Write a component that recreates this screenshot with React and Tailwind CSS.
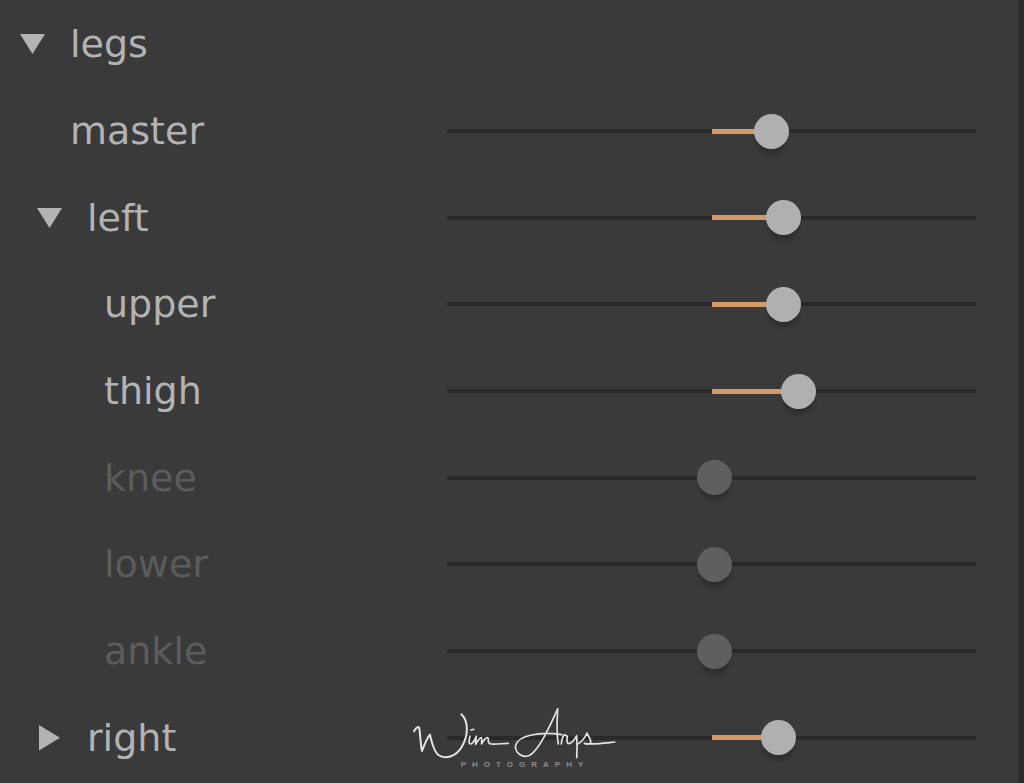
import { useState } from 'react';
import clsx from 'clsx';

const ROWS = [
    { id: 'legs', level: 0, group: true },
    { id: 'master', parent: 'legs', level: 0, value: 0.241 },
    { id: 'left', parent: 'legs', level: 1, group: true, value: 0.291 },
    { id: 'upper', parent: 'left', level: 2, value: 0.291 },
    { id: 'thigh', parent: 'left', level: 2, value: 0.352 },
    { id: 'knee', parent: 'left', level: 2, value: 0.01, disabled: true },
    { id: 'lower', parent: 'left', level: 2, value: 0.01, disabled: true },
    { id: 'ankle', parent: 'left', level: 2, value: 0.01, disabled: true },
    { id: 'right', parent: 'legs', level: 1, group: true, value: 0.271 },
];

const INDENT = ['pl-5', 'pl-[37px]', 'pl-[54px]'];

function Arrow({ open }) {
    return (
        <svg width="26" height="26" viewBox="0 0 26 26" className="fill-[#b3b3b3]" aria-hidden="true">
            {open ? <path d="M0 3h25L12.500 23z" /> : <path d="M2 0v25.500L23 12.750z" />}
        </svg>
    );
}

function Slider({ id, value, disabled, onChange }) {
    // The fill runs from the centre of the track to the centre of the thumb
    const fill = {
        width: `calc((100% - 35px) * ${Math.abs(value) / 2})`,
        [value < 0 ? 'right' : 'left']: '50%',
    };

    return (
        <div className="relative flex h-9 items-center">
            <div className="h-1 w-full bg-[#292929]" />
            {!disabled && <div className="absolute h-[5px] bg-[#d29a66]" style={fill} />}
            <input
                id={id}
                type="range"
                min="-1"
                max="1"
                step="any"
                value={value}
                disabled={disabled}
                onChange={(e) => onChange(Number(e.target.value))}
                className="absolute inset-0 h-full w-full cursor-pointer appearance-none bg-transparent disabled:cursor-default [&::-webkit-slider-thumb]:h-[35px] [&::-webkit-slider-thumb]:w-[35px] [&::-webkit-slider-thumb]:appearance-none [&::-webkit-slider-thumb]:rounded-full [&::-webkit-slider-thumb]:bg-[#b1b0b0] [&::-webkit-slider-thumb]:shadow-[0_8px_4px_-2px_rgba(0,0,0,0.2)] disabled:[&::-webkit-slider-thumb]:bg-[#5f5f5f]"
            />
        </div>
    );
}

function Signature() {
    return (
        <div className="pointer-events-none absolute bottom-3.5 left-[413px] flex flex-col items-center">
            <svg
                width="204"
                height="56"
                viewBox="40 30 612 168"
                role="img"
                aria-label="Wim Arys"
                className="fill-none stroke-[#e4e4e4]"
                strokeLinecap="round"
                strokeLinejoin="round"
                strokeWidth="5"
            >
                <path strokeWidth="6" d="M43 109C46 102 54 93 58 97C62 112 62 148 67 168C74 150 82 128 91 119C96 140 100 166 116 180C136 194 168 186 186 156C206 122 208 80 185 58" />
                <path d="M211 124C207 138 207 148 213 147C221 145 226 132 230 124C228 136 227 144 228 148C234 138 240 127 245 128C248 132 245 142 246 147C251 136 260 125 265 129C268 136 262 146 274 147C292 149 308 145 326 145" />
                <path d="M214 105L222 103" />
                <path d="M474 42C450 92 424 156 392 180C368 192 344 172 348 150C356 122 420 108 486 119" />
                <path d="M474 42C472 76 470 116 476 147" />
                <path d="M485 147C486 136 488 126 493 120C497 118 500 124 503 124C502 134 500 146 508 146C518 144 526 132 531 122C532 146 533 168 531 188" />
                <path d="M533 148C544 142 556 128 562 114C564 124 578 134 572 144C568 149 558 148 554 145C576 150 616 144 645 141" />
            </svg>
            <span className="pl-5 font-['Liberation_Sans',sans-serif] text-[8px] leading-2 font-bold tracking-[6px] text-[#8c8c8c]">PHOTOGRAPHY</span>
        </div>
    );
}

export default function App() {
    const [open, setOpen] = useState({ legs: true, left: true, right: false });
    const [values, setValues] = useState(Object.fromEntries(ROWS.map((row) => [row.id, row.value])));

    const isVisible = (row) => {
        if (!row.parent) return true;
        return open[row.parent] && isVisible(ROWS.find((r) => r.id === row.parent));
    };

    return (
        <main className="relative flex min-h-screen flex-col border-r-[5px] border-[#2b2b2b] bg-[#3a3a3a] pt-px pr-[43px] pb-0.5 font-['DejaVu_Sans',sans-serif] text-[38px] leading-12">
            {ROWS.filter(isVisible).map((row) => (
                <div key={row.id} className="grid min-h-16 flex-1 grid-cols-[11fr_13fr] items-center">
                    <div className={clsx('flex items-center', INDENT[row.level], row.disabled ? 'text-[#5c5c5c]' : 'text-[#b3b3b3]')}>
                        <div className="flex w-[50px] shrink-0">
                            {row.group && (
                                <button
                                    type="button"
                                    aria-label={`Toggle ${row.id}`}
                                    aria-expanded={open[row.id]}
                                    onClick={() => setOpen({ ...open, [row.id]: !open[row.id] })}
                                >
                                    <Arrow open={open[row.id]} />
                                </button>
                            )}
                        </div>
                        {row.value === undefined ? <span>{row.id}</span> : <label htmlFor={row.id}>{row.id}</label>}
                    </div>
                    {row.value !== undefined && (
                        <Slider
                            id={row.id}
                            value={values[row.id]}
                            disabled={row.disabled}
                            onChange={(value) => setValues({ ...values, [row.id]: value })}
                        />
                    )}
                </div>
            ))}
            <Signature />
        </main>
    );
}
